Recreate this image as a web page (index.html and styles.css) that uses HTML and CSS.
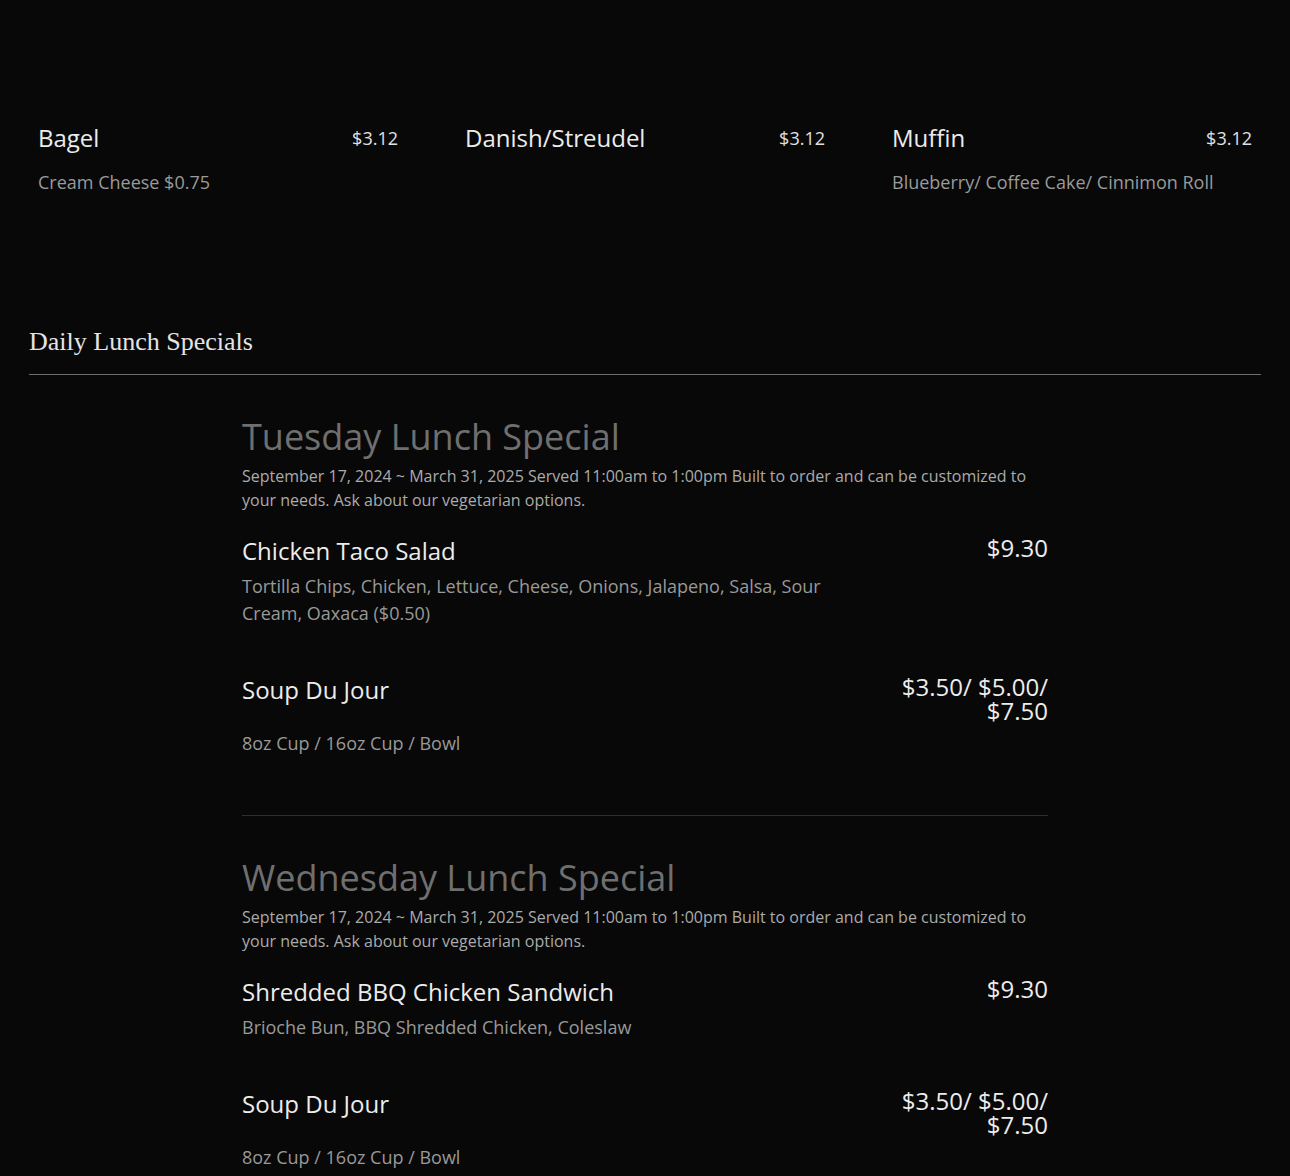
FILE: index.html
```html
<!DOCTYPE html>
<html lang="en">
<head>
<meta charset="utf-8">
<title>Menu</title>
<link rel="stylesheet" href="styles.css">
</head>
<body>
<main class="page">
  <section class="bakery">
    <div class="bk-item">
      <div class="bk-row"><h3 class="bk-name">Bagel</h3><span class="bk-price">$3.12</span></div>
      <p class="bk-desc">Cream Cheese $0.75</p>
    </div>
    <div class="bk-item">
      <div class="bk-row"><h3 class="bk-name">Danish/Streudel</h3><span class="bk-price">$3.12</span></div>
    </div>
    <div class="bk-item">
      <div class="bk-row"><h3 class="bk-name">Muffin</h3><span class="bk-price">$3.12</span></div>
      <p class="bk-desc">Blueberry/ Coffee Cake/ Cinnimon Roll</p>
    </div>
  </section>

  <header class="cat-head">
    <h2 class="cat-title">Daily Lunch Specials</h2>
  </header>

  <section class="specials">
    <div class="special">
      <h2 class="sp-title">Tuesday Lunch Special</h2>
      <p class="sp-info">September 17, 2024 ~ March 31, 2025 Served 11:00am to 1:00pm Built to order and can be customized to your needs. Ask about our vegetarian options.</p>
      <div class="item">
        <div class="item-row"><h3 class="item-name">Chicken Taco Salad</h3><span class="item-price">$9.30</span></div>
        <p class="item-desc">Tortilla Chips, Chicken, Lettuce, Cheese, Onions, Jalapeno, Salsa, Sour Cream, Oaxaca ($0.50)</p>
      </div>
      <div class="item">
        <div class="item-row"><h3 class="item-name">Soup Du Jour</h3><span class="item-price">$3.50/ $5.00/ $7.50</span></div>
        <p class="item-desc">8oz Cup / 16oz Cup / Bowl</p>
      </div>
    </div>
    <hr class="sp-divider">
    <div class="special">
      <h2 class="sp-title">Wednesday Lunch Special</h2>
      <p class="sp-info">September 17, 2024 ~ March 31, 2025 Served 11:00am to 1:00pm Built to order and can be customized to your needs. Ask about our vegetarian options.</p>
      <div class="item">
        <div class="item-row"><h3 class="item-name">Shredded BBQ Chicken Sandwich</h3><span class="item-price">$9.30</span></div>
        <p class="item-desc">Brioche Bun, BBQ Shredded Chicken, Coleslaw</p>
      </div>
      <div class="item">
        <div class="item-row"><h3 class="item-name">Soup Du Jour</h3><span class="item-price">$3.50/ $5.00/ $7.50</span></div>
        <p class="item-desc">8oz Cup / 16oz Cup / Bowl</p>
      </div>
    </div>
  </section>
</main>
</body>
</html>
```

FILE: styles.css
```css
html, body {
  margin: 0;
  padding: 0;
  background: #080808;
}
body {
  font-family: "Open Sans", "Noto Sans", sans-serif;
  color: #e6e6e6;
}
h2, h3, p { margin: 0; font-weight: 400; }

.page {
  padding: 121px 29px 0;
}

.bakery {
  display: grid;
  grid-template-columns: repeat(3, 360px);
  column-gap: 67px;
  padding: 0 9px;
  height: 202px;
}
.bk-row {
  display: flex;
  justify-content: space-between;
  align-items: center;
  height: 34px;
}
.bk-name {
  font-size: 24px;
  line-height: 34px;
  color: #ececec;
}
.bk-price {
  font-size: 18px;
  line-height: 34px;
  color: #e0e0e0;
}
.bk-desc {
  margin-top: 17px;
  font-size: 18px;
  line-height: 20px;
  color: #9a9a9a;
}

.cat-head {
  border-bottom: 1px solid #6e6e6e;
  padding-bottom: 14px;
}
.cat-title {
  font-family: "Liberation Serif", "DejaVu Serif", serif;
  font-size: 26px;
  line-height: 37px;
  color: #e4e4e4;
}

.specials {
  width: 806px;
  margin: 0 auto;
  padding-top: 37px;
}
.sp-title {
  font-size: 36px;
  line-height: 50px;
  color: #6f6f6f;
}
.sp-info {
  margin-top: 2px;
  font-size: 16px;
  line-height: 24px;
  color: #ababab;
}
.item {
  margin-top: 24px;
}
.item + .item {
  margin-top: 48px;
}
.item-row {
  display: flex;
  justify-content: space-between;
  align-items: flex-start;
}
.item-name {
  font-size: 24px;
  line-height: 30px;
  color: #ececec;
}
.item-price {
  width: 202px;
  flex: none;
  text-align: right;
  font-size: 24px;
  line-height: 24px;
  color: #ececec;
}
.item-desc {
  margin-top: 7px;
  width: 604px;
  font-size: 18px;
  line-height: 27px;
  color: #999999;
}
.sp-divider {
  margin: 58px 0 37px;
  border: 0;
  border-top: 1px solid #2e2e2e;
  height: 0;
}
```
